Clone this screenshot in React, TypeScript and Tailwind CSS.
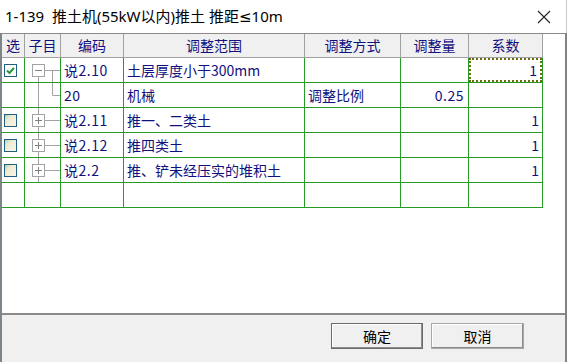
import React from "react";

const G = "border-[#259a25]";

function Tree({ kind }: { kind: "root" | "child" | "plus" }) {
  const c = "#a3a3a3";
  return (
    <svg width="35" height="24" viewBox="0 0 35 24" className="block">
      {kind === "root" && (
        <>
          <line x1="13.5" y1="18" x2="13.5" y2="24" stroke={c} />
          <line x1="27.5" y1="12.5" x2="27.5" y2="24" stroke={c} />
        </>
      )}
      {kind === "child" && (
        <>
          <line x1="13.5" y1="0" x2="13.5" y2="24" stroke={c} />
          <line x1="27.5" y1="0" x2="27.5" y2="12.5" stroke={c} />
          <line x1="27.5" y1="12.5" x2="35" y2="12.5" stroke={c} />
        </>
      )}
      {kind === "plus" && <line x1="13.5" y1="0" x2="13.5" y2="24" stroke={c} />}
      {kind !== "child" && (
        <>
          <line x1="19" y1="12.5" x2="35" y2="12.5" stroke={c} />
          <rect x="7.5" y="6.5" width="12" height="12" fill="#fff" stroke={c} />
          <line x1="10" y1="12.5" x2="17" y2="12.5" stroke="#808080" />
          {kind === "plus" && <line x1="13.5" y1="9" x2="13.5" y2="16" stroke="#808080" />}
        </>
      )}
    </svg>
  );
}

function Check({ checked }: { checked: boolean }) {
  return (
    <div
      className={
        "w-[13px] h-[13px] border border-[#1f5f80] flex items-center justify-center " +
        (checked ? "bg-white" : "bg-[linear-gradient(135deg,#a9d3a0_0%,#ece9d2_30%,#fbf6e4_100%)]")
      }
    >
      {checked && (
        <svg width="9" height="9" viewBox="0 0 9 9">
          <path d="M1 4.5 L3.5 7 L8 1.8" stroke="#1e9a3a" strokeWidth="2" fill="none" />
        </svg>
      )}
    </div>
  );
}

type Row = {
  chk: boolean | null;
  tree: "root" | "child" | "plus" | null;
  code: string;
  range: string;
  mode: string;
  amt: string;
  coef: string;
  focus?: boolean;
};

const rows: Row[] = [
  { chk: true, tree: "root", code: "说2.10", range: "土层厚度小于300mm", mode: "", amt: "", coef: "1", focus: true },
  { chk: null, tree: "child", code: "20", range: "机械", mode: "调整比例", amt: "0.25", coef: "" },
  { chk: false, tree: "plus", code: "说2.11", range: "推一、二类土", mode: "", amt: "", coef: "1" },
  { chk: false, tree: "plus", code: "说2.12", range: "推四类土", mode: "", amt: "", coef: "1" },
  { chk: false, tree: "plus", code: "说2.2", range: "推、铲未经压实的堆积土", mode: "", amt: "", coef: "1" },
  { chk: null, tree: null, code: "", range: "", mode: "", amt: "", coef: "" },
];

const cols = "grid grid-cols-[23px_36px_63px_181px_96px_68px_74px]";

export default function App() {
  const cell = `border-r border-b ${G} h-[25px] flex items-center`;
  return (
    <div
      className="w-[567px] h-[362px] bg-white flex flex-col overflow-hidden text-[#10107e]"
      style={{ fontFamily: '"Noto Sans CJK SC", "Noto Sans", sans-serif' }}
    >
      <div
        className="h-[33px] flex items-center justify-between pl-[5px] pr-[15px] text-[15px] text-black border-r border-[#c8c8c8]"
        style={{ fontFamily: '"Noto Sans", "Noto Sans CJK SC", sans-serif' }}
      >
        <span className="whitespace-pre">
          1-139  推土机(55kW以内)推土 推距
          <span style={{ fontFamily: '"DejaVu Sans", sans-serif' }}>≤</span>10m
        </span>
        <svg width="14" height="14" viewBox="0 0 14 14">
          <path d="M1 1 L13 13 M13 1 L1 13" stroke="#222" strokeWidth="1.1" />
        </svg>
      </div>
      <div className="flex-1 flex flex-col border-l-2 border-r-2 border-[#7d858a] bg-[#f0f0f0]">
        <div className="h-[282px] bg-white border-t border-b-2 border-[#8a8a8a] text-[14px]">
          <div className={cols}>
            {["选", "子目", "编码", "调整范围", "调整方式", "调整量", "系数"].map((h) => (
              <div
                key={h}
                className={`h-[24px] bg-[#f0f0f0] border-r border-[#a0a0a0] border-b ${G} flex items-center justify-center`}
              >
                {h}
              </div>
            ))}
            {rows.map((r, i) => (
              <React.Fragment key={i}>
                <div className={`${cell} pl-[2px]`}>{r.chk !== null && <Check checked={r.chk} />}</div>
                <div className={`${cell}`}>{r.tree && <Tree kind={r.tree} />}</div>
                <div className={`${cell} pl-[3px] tracking-[0.5px]`}>{r.code}</div>
                <div className={`${cell} pl-[3px]`}>{r.range}</div>
                <div className={`${cell} pl-[3px]`}>{r.mode}</div>
                <div className={`${cell} justify-end pr-[4px] tracking-[0.5px]`}>{r.amt}</div>
                <div className={`${cell} p-0`}>
                  <div
                    className={
                      "w-full h-full flex items-center justify-end pr-[3px] " +
                      (r.focus ? "border-2 border-dotted border-[#6e6a10]" : "")
                    }
                  >
                    {r.coef}
                  </div>
                </div>
              </React.Fragment>
            ))}
          </div>
        </div>
        <div className="flex justify-end gap-[8px] pt-[8px] pr-[41px] text-[14px] text-black">
          <button className="w-[92px] h-[26px] bg-[#f0f0f0] border border-[#6a6a6a] shadow-[inset_-1px_-1px_0_#8c8c8c,inset_1px_1px_0_#ffffff] flex items-center justify-center">
            确定
          </button>
          <button className="w-[93px] h-[26px] bg-[#f0f0f0] border border-[#a8a8a8] shadow-[inset_-1px_-1px_0_#8c8c8c,inset_1px_1px_0_#ffffff] flex items-center justify-center">
            取消
          </button>
        </div>
      </div>
    </div>
  );
}
